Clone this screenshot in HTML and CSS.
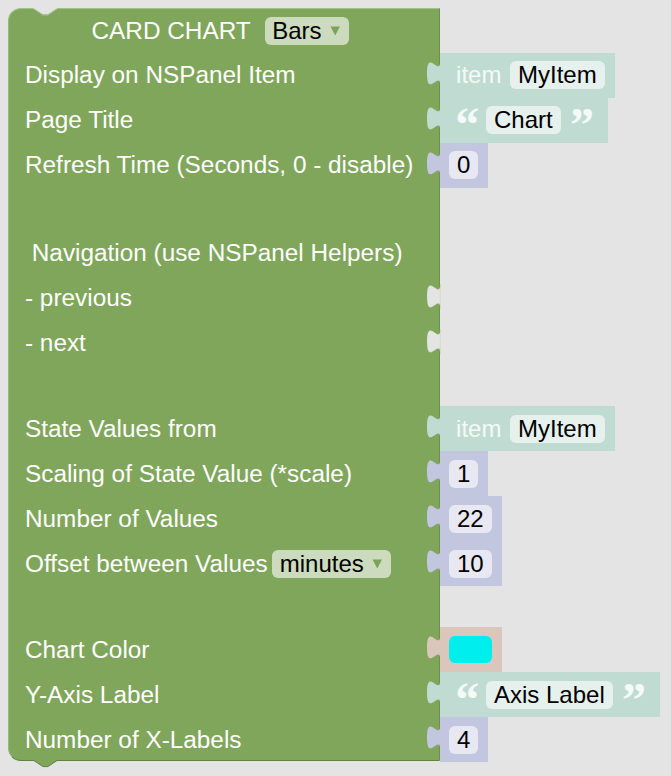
FILE: index.html
```html
<!DOCTYPE html>
<html lang="en">
<head>
<meta charset="utf-8">
<title>Card Chart block</title>
<link rel="stylesheet" href="styles.css">
</head>
<body>
<div class="canvas">
  <div class="block">
    <!-- title -->
    <div class="cell first title-cell">
      <svg class="top-notch" viewBox="0 0 24.75 7.6"><polygon points="0,0 9.9,6.6 14.85,6.6 24.75,0"/><polyline points="0,0.5 9.9,7.1 14.85,7.1 24.75,0.5"/></svg>
      <span class="title">CARD CHART</span>
      <span class="dd dd-title">Bars<svg class="arrow" viewBox="0 0 10.5 10"><polygon points="0.5,0.5 10,0.5 5.25,9.5"/></svg></span>
    </div>
    <div class="slot"></div>

    <div class="cell h45">Display on NSPanel Item</div>
    <div class="slot">
      <div class="val item">
        <svg class="tab" viewBox="0 0 8 15" preserveAspectRatio="none"><path d="M8,0 c0,10 -8,-8 -8,7.5 s8,-2.5 8,7.5 Z"/></svg>
        <span class="item-label">item</span><span class="field">MyItem</span>
      </div>
    </div>

    <div class="cell h45">Page Title</div>
    <div class="slot">
      <div class="val text">
        <svg class="tab" viewBox="0 0 8 15" preserveAspectRatio="none"><path d="M8,0 c0,10 -8,-8 -8,7.5 s8,-2.5 8,7.5 Z"/></svg>
        <span class="q open">“</span><span class="field">Chart</span><span class="q close">”</span>
      </div>
    </div>

    <div class="cell h45">Refresh Time (Seconds, 0 - disable)</div>
    <div class="slot">
      <div class="val num">
        <svg class="tab" viewBox="0 0 8 15" preserveAspectRatio="none"><path d="M8,0 c0,10 -8,-8 -8,7.5 s8,-2.5 8,7.5 Z"/></svg>
        <span class="field">0</span>
      </div>
    </div>

    <div class="cell h43"></div>
    <div class="slot"></div>

    <div class="cell h45 pre"> Navigation (use NSPanel Helpers)</div>
    <div class="slot"></div>

    <div class="cell h45">- previous
      <svg class="notch" viewBox="0 0 8 15" preserveAspectRatio="none"><path d="M8,0 c0,10 -8,-8 -8,7.5 s8,-2.5 8,7.5 Z"/></svg>
    </div>
    <div class="slot"></div>

    <div class="cell h45">- next
      <svg class="notch" viewBox="0 0 8 15" preserveAspectRatio="none"><path d="M8,0 c0,10 -8,-8 -8,7.5 s8,-2.5 8,7.5 Z"/></svg>
    </div>
    <div class="slot"></div>

    <div class="cell h40"></div>
    <div class="slot"></div>

    <div class="cell h45">State Values from</div>
    <div class="slot">
      <div class="val item">
        <svg class="tab" viewBox="0 0 8 15" preserveAspectRatio="none"><path d="M8,0 c0,10 -8,-8 -8,7.5 s8,-2.5 8,7.5 Z"/></svg>
        <span class="item-label">item</span><span class="field">MyItem</span>
      </div>
    </div>

    <div class="cell h45">Scaling of State Value (*scale)</div>
    <div class="slot">
      <div class="val num">
        <svg class="tab" viewBox="0 0 8 15" preserveAspectRatio="none"><path d="M8,0 c0,10 -8,-8 -8,7.5 s8,-2.5 8,7.5 Z"/></svg>
        <span class="field">1</span>
      </div>
    </div>

    <div class="cell h45">Number of Values</div>
    <div class="slot">
      <div class="val num">
        <svg class="tab" viewBox="0 0 8 15" preserveAspectRatio="none"><path d="M8,0 c0,10 -8,-8 -8,7.5 s8,-2.5 8,7.5 Z"/></svg>
        <span class="field">22</span>
      </div>
    </div>

    <div class="cell h45">Offset between Values<span class="dd dd-inline">minutes<svg class="arrow" viewBox="0 0 10.5 10"><polygon points="0.5,0.5 10,0.5 5.25,9.5"/></svg></span></div>
    <div class="slot">
      <div class="val num">
        <svg class="tab" viewBox="0 0 8 15" preserveAspectRatio="none"><path d="M8,0 c0,10 -8,-8 -8,7.5 s8,-2.5 8,7.5 Z"/></svg>
        <span class="field">10</span>
      </div>
    </div>

    <div class="cell h41"></div>
    <div class="slot"></div>

    <div class="cell h45">Chart Color</div>
    <div class="slot">
      <div class="val colour">
        <svg class="tab" viewBox="0 0 8 15" preserveAspectRatio="none"><path d="M8,0 c0,10 -8,-8 -8,7.5 s8,-2.5 8,7.5 Z"/></svg>
        <span class="swatch"></span>
      </div>
    </div>

    <div class="cell h45">Y-Axis Label</div>
    <div class="slot">
      <div class="val text">
        <svg class="tab" viewBox="0 0 8 15" preserveAspectRatio="none"><path d="M8,0 c0,10 -8,-8 -8,7.5 s8,-2.5 8,7.5 Z"/></svg>
        <span class="q open">“</span><span class="field">Axis Label</span><span class="q close">”</span>
      </div>
    </div>

    <div class="cell last">Number of X-Labels
      <svg class="bottom-tab" viewBox="0 0 24.75 8"><polygon points="0,0 9.9,6.6 14.85,6.6 24.75,0"/><polyline points="0,0 9.9,6.6 14.85,6.6 24.75,0"/></svg>
    </div>
    <div class="slot">
      <div class="val num">
        <svg class="tab" viewBox="0 0 8 15" preserveAspectRatio="none"><path d="M8,0 c0,10 -8,-8 -8,7.5 s8,-2.5 8,7.5 Z"/></svg>
        <span class="field">4</span>
      </div>
    </div>
  </div>
</div>
</body>
</html>
```

FILE: styles.css
```css
html, body {
  margin: 0;
  background: #e4e4e4;
}

body {
  font-family: "Liberation Sans", Arial, sans-serif;
  font-size: 24px;
}

.canvas {
  box-sizing: border-box;
  height: 776px;
  padding: 8px 0 0 8px;
  overflow: hidden;
}

.block {
  display: grid;
  grid-template-columns: 432px max-content;
  width: max-content;
}

.cell {
  position: relative;
  box-sizing: border-box;
  display: flex;
  align-items: center;
  padding-left: 16px;
  background: #80a65b;
  color: #fff;
  font-size: 24.35px;
  white-space: nowrap;
  border-left: 1px solid #98b97a;
  border-right: 1px solid #6e8f4e;
}

.pre { white-space: pre; }

.h45 { height: 45px; }
.h43 { height: 43px; }
.h41 { height: 41px; }
.h40 { height: 40.5px; }

.first {
  height: 44.5px;
  border-top: 1px solid #a4c189;
  border-top-left-radius: 13px;
}

.title-cell { padding-left: 82.5px; }

.last {
  height: 44px;
  align-self: start;
  padding-top: 2px;
  border-bottom: 1px solid #627f45;
  border-bottom-left-radius: 13px;
}

.slot {
  display: flex;
  align-items: flex-start;
}

/* top notch (previous connection) */
.top-notch {
  position: absolute;
  left: 23.75px;
  top: -1px;
  width: 24.75px;
  height: 7.6px;
  overflow: visible;
}
.top-notch polygon { fill: #e4e4e4; }
.top-notch polyline { fill: none; stroke: #a4c189; stroke-width: 1; }

/* bottom tab (next connection) */
.bottom-tab {
  position: absolute;
  left: 23.75px;
  top: 100%;
  width: 24.75px;
  height: 8px;
  overflow: visible;
}
.bottom-tab polygon { fill: #80a65b; }
.bottom-tab polyline { fill: none; stroke: #627f45; stroke-width: 1; }

/* empty value input notch */
.notch {
  position: absolute;
  right: -1px;
  top: 8.25px;
  width: 13.2px;
  height: 24.75px;
  overflow: visible;
  fill: #e4e4e4;
  stroke: #9dbd80;
  stroke-width: 0.15;
}

/* dropdowns on the main block */
.dd {
  display: inline-flex;
  align-items: center;
  height: 28px;
  line-height: 28px;
  padding: 0 8px 0 7.5px;
  border-radius: 6px;
  background: #ccdbbd;
  color: #000;
  font-size: 24px;
}
.dd-title { margin-left: 14px; }
.dd-inline { margin-left: 4.5px; }

.arrow {
  width: 10.5px;
  height: 10px;
  margin-left: 8.5px;
  fill: #7da35a;
}

/* child value blocks */
.val {
  --c: #c2c6de;
  position: relative;
  box-sizing: border-box;
  height: 45px;
  display: flex;
  align-items: center;
  background: var(--c);
  white-space: nowrap;
}

.tab {
  position: absolute;
  left: -13px;
  top: 8.25px;
  width: 13.2px;
  height: 24.75px;
  overflow: visible;
  fill: var(--c);
}

.field {
  height: 28px;
  line-height: 28px;
  padding: 0 8px;
  border-radius: 6px;
  color: #000;
}

.item {
  --c: #c0dcd2;
  padding: 0 10.3px 0 16.1px;
}
.item .field { margin-left: 8.6px; background: #e6f1ed; }
.item-label { color: #f4faf7; }

.text {
  --c: #c0dcd2;
  padding: 0 14px 0 15.2px;
}
.text .field { background: #e6f1ed; }

.q {
  display: block;
  align-self: flex-start;
  width: 24px;
  height: 20px;
  margin-top: 3.8px;
  overflow: visible;
  font-family: "Liberation Serif", "Times New Roman", serif;
  font-weight: bold;
  font-size: 48px;
  line-height: 48px;
  color: #f4faf7;
}
.q.open { margin-right: 6.8px; }
.q.close { margin-left: 9.3px; }

.num {
  --c: #c2c6de;
  padding: 0 10px 0 9px;
}
.num .field { background: #e7e8f2; }

.colour {
  --c: #dbc6bc;
  padding: 0 10px 0 9px;
}
.swatch {
  display: block;
  width: 43px;
  height: 26.6px;
  border-radius: 6px;
  background: #00eeee;
}
```
